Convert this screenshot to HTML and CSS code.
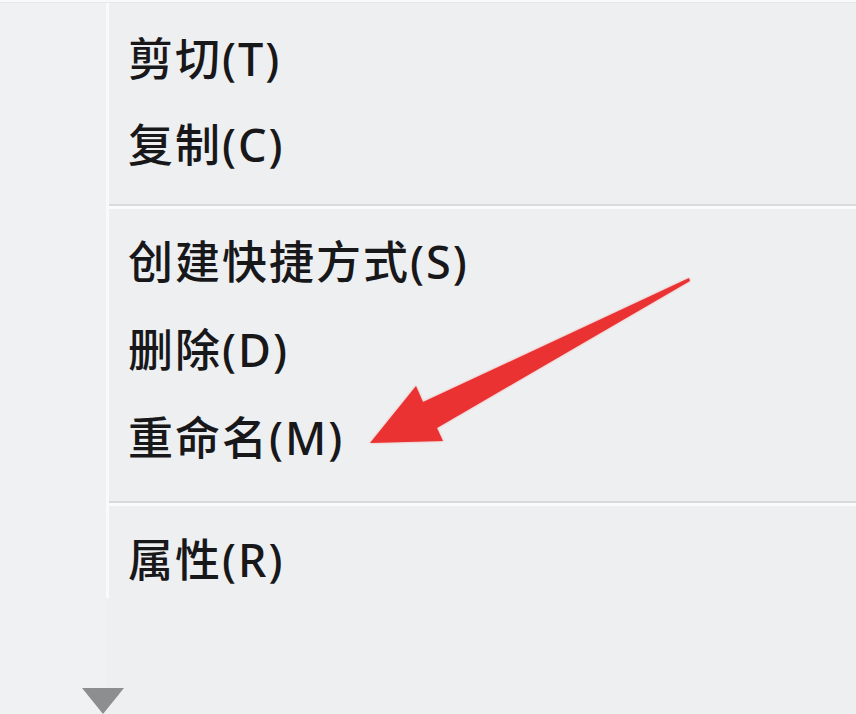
FILE: index.html
```html
<!DOCTYPE html>
<html lang="zh-CN">
<head>
<meta charset="utf-8">
<title>右键菜单</title>
<link rel="stylesheet" href="styles.css">
</head>
<body>
<div class="screen">
  <div class="topline"></div>
  <div class="body-row">
    <div class="gutter"></div>
    <div class="vline"></div>
    <div class="menu">
      <div class="group first">
        <div class="item">剪切(T)</div>
        <div class="item">复制(C)</div>
      </div>
      <div class="sep sep-a"><div class="dark"></div><div class="light"></div></div>
      <div class="group wide">
        <div class="item">创建快捷方式(S)</div>
        <div class="item">删除(D)</div>
        <div class="item">重命名(M)</div>
      </div>
      <div class="sep sep-b"><div class="dark"></div><div class="light"></div></div>
      <div class="group wide">
        <div class="item">属性(R)</div>
      </div>
    </div>
  </div>
  <div class="caret"></div>
  <svg class="arrow" width="856" height="714" viewBox="0 0 856 714">
    <defs>
      <filter id="glow" x="-10%" y="-10%" width="120%" height="120%">
        <feGaussianBlur stdDeviation="1.2"/>
      </filter>
    </defs>
    <polygon points="689,278 423,402 416,386 370,443 443,441 437,428 690,281" fill="#f4a0a0" filter="url(#glow)"/>
    <polygon points="689,278 423,402 416,386 370,443 443,441 437,428 690,281" fill="#ea3232"/>
  </svg>
</div>
</body>
</html>
```

FILE: styles.css
```css
html, body {
  margin: 0;
  padding: 0;
}
body {
  width: 856px;
  height: 714px;
  overflow: hidden;
  background: #eeeff1;
  font-family: "Noto Sans", "Noto Sans CJK SC", sans-serif;
}
.screen {
  position: relative;
  width: 856px;
  height: 714px;
  background: #eeeff1;
}
.topline {
  height: 2px;
  background: #f8f9fa;
  border-bottom: 1px solid #e6e7e9;
}
.body-row {
  display: flex;
  align-items: flex-start;
}
.gutter {
  width: 106px;
  height: 711px;
  background: #f0f1f3;
}
.vline {
  width: 3px;
  height: 595px;
  background: #f9fafb;
}
.menu {
  flex: 1;
  display: flex;
  flex-direction: column;
}
.group.first {
  padding-top: 13px;
}
.item {
  height: 86px;
  line-height: 86px;
  padding-left: 19px;
  font-size: 45px;
  font-weight: 500;
  letter-spacing: 2px;
  color: #18181a;
  white-space: nowrap;
}
.group.wide .item {
  height: 88px;
  line-height: 88px;
}
.sep {
  display: flex;
  flex-direction: column;
}
.sep-a {
  height: 30px;
  padding-top: 16px;
  box-sizing: border-box;
}
.sep-b {
  height: 34px;
  padding-top: 19px;
  box-sizing: border-box;
}
.sep .dark {
  height: 2px;
  background: #d9dadc;
}
.sep .light {
  height: 3px;
  background: #fbfbfc;
}
.caret {
  position: absolute;
  left: 82px;
  top: 688px;
  width: 0;
  height: 0;
  border-left: 21px solid transparent;
  border-right: 21px solid transparent;
  border-top: 26px solid #8d8e90;
}
.arrow {
  position: absolute;
  left: 0;
  top: 0;
  pointer-events: none;
}
```
